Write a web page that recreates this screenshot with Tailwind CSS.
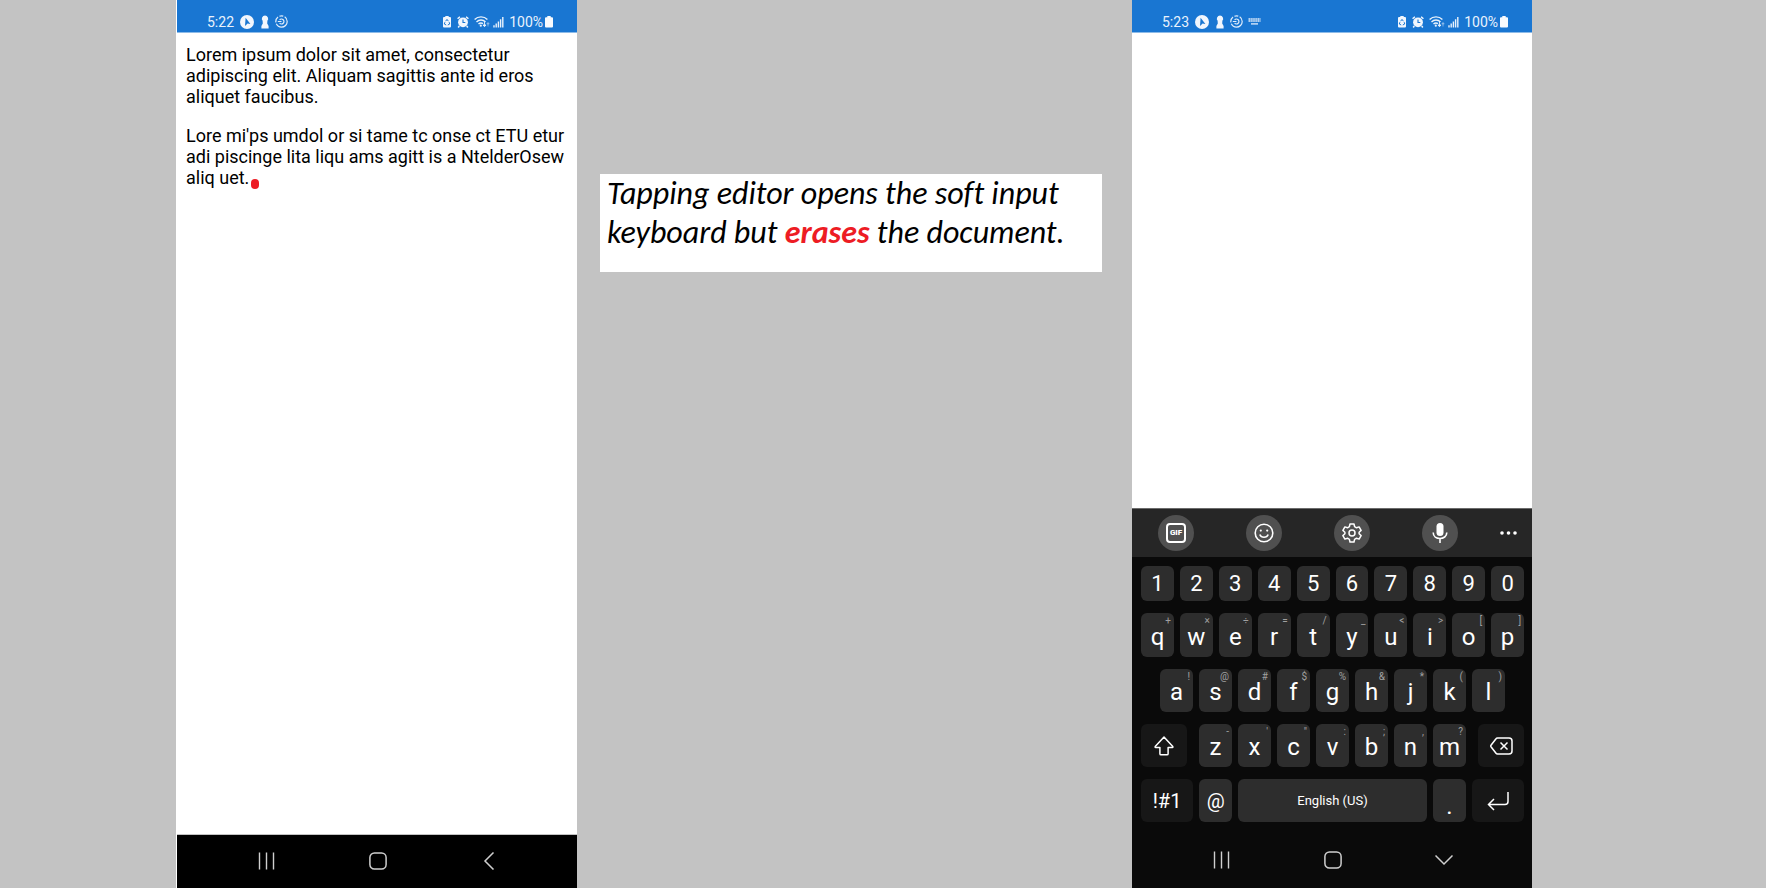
<!DOCTYPE html>
<html lang="en">
<head>
<meta charset="utf-8">
<meta name="viewport" content="width=device-width, initial-scale=1">
<title>Soft input keyboard erases the document</title>
<script src="https://cdn.jsdelivr.net/npm/@tailwindcss/browser@4"></script>
</head>
<body class="bg-[#c3c3c3] font-['Roboto',sans-serif]">
<svg class="hidden" aria-hidden="true">
  <symbol id="cursor" viewBox="0 0 14 14"><circle cx="7" cy="7" r="7" fill="#f1f6fd"/><path d="M5.600 2.800 10.400 9 7.600 8.600 5 11Z" fill="#1976d2"/></symbol>
  <symbol id="keyhole" viewBox="0 0 8 14"><path d="M4 .5a3.200 3.200 0 0 1 2.400 5.300L6.200 8.500 7.600 11v2.500H.4V11l1.400-2.500-.2-2.700A3.200 3.200 0 0 1 4 .5Z" fill="#f1f6fd"/></symbol>
  <symbol id="sync" viewBox="0 0 13 13"><g fill="none" stroke="#e3eefb" stroke-width="1.200"><circle cx="6.500" cy="6.500" r="5.700" stroke-dasharray="15 1.500 6 1.500 4 1.500"/><path d="M4.600 4.800a2.500 2.500 0 1 1 0 3.400M2.800 6.500h3.700"/></g></symbol>
  <symbol id="mini-keyboard" viewBox="0 0 13 7"><path d="M.5 1h12M.5 3h12" stroke="#e3eefb" stroke-width="1.500" stroke-dasharray="1.500 .4" fill="none"/><path d="M3 5.900h7" stroke="#e3eefb" stroke-width="1.300"/></symbol>
  <symbol id="recycle" viewBox="0 0 8 12"><path d="M2.300 0h3.400v1H7a1 1 0 0 1 1 1v8.500A1 1 0 0 1 7 11.500H1a1 1 0 0 1-1-1V2a1 1 0 0 1 1-1h1.300Z" fill="#f1f6fd"/><path d="M2.600 5.200 4 3.400l1.400 1.800M6.200 6.200l.5 1.800-1.900 1M3.200 9 1.300 8l.6-1.800" fill="none" stroke="#1976d2"/></symbol>
  <symbol id="alarm" viewBox="0 0 12 12"><circle cx="6" cy="6.300" r="4.900" fill="#f1f6fd"/><path d="M.6 2.800 2.900.8M11.400 2.800 9.100.8M2.300 10 1.200 11.500M9.700 10l1.100 1.500" stroke="#f1f6fd" stroke-width="1.500"/><path d="M6 3.500v3h2.300" fill="none" stroke="#1976d2" stroke-width="1.100"/></symbol>
  <symbol id="wifi" viewBox="0 0 16 13"><g fill="none" stroke="#e9f2fc" stroke-width="1.400"><path d="M.6 4.500a9 9 0 0 1 12.800 0M2.500 6.900a6.400 6.400 0 0 1 9 0M4.500 9.100a3.600 3.600 0 0 1 4.500-.5"/></g><circle cx="6.800" cy="10.700" r="1.100" fill="#e9f2fc"/><path d="M10.500 7v4M9 10l1.500 1.700L12 10Z" stroke="#e9f2fc" fill="#e9f2fc" stroke-width=".9"/><path d="M14 11.500V8M12.800 9 14 7.500 15.200 9Z" stroke="#8dbbea" fill="#8dbbea" stroke-width=".8"/></symbol>
  <symbol id="signal" viewBox="0 0 11 12"><path d="M1 11.500V9.300M3.200 11.500V7.600M5.400 11.500V5.500M7.600 11.500V3.300M9.800 11.500V1" stroke="#e9f2fc" stroke-width="1.400"/></symbol>
  <symbol id="battery" viewBox="0 0 8 12"><path d="M2.300 0h3.400v1.200H7a1 1 0 0 1 1 1v8.300a1 1 0 0 1-1 1H1a1 1 0 0 1-1-1V2.200a1 1 0 0 1 1-1h1.300Z" fill="#f7fafe"/></symbol>
  <symbol id="recents" viewBox="0 0 18 18"><path d="M1.500 .5v17M8.500 .5v17M15.500 .5v17" stroke="#cfcfcf" stroke-width="1.400"/></symbol>
  <symbol id="home" viewBox="0 0 18 18"><rect x=".9" y=".9" width="16.200" height="16.200" rx="4.500" fill="none" stroke="#cfcfcf" stroke-width="1.500"/></symbol>
</svg>

<div class="grid min-h-screen grid-cols-[176fr_401fr_23fr_502fr_30fr_400fr_234fr]">

  <section aria-label="Before tapping" class="col-start-2 flex min-w-0 flex-col border-l border-white bg-white">
    <header class="flex h-8 items-end justify-between bg-[#1976d2] pr-6 pb-[3px] pl-[30px] text-sm text-[#e9f2fc] shadow-[0_1px_0_#8dbbe8]">
      <div class="flex h-[15px] items-center">
        <time class="mr-1.5">5:22</time>
        <svg class="mr-[7px] h-[14px] w-[14px]"><use href="#cursor"/></svg>
        <svg class="mr-1.5 h-[14px] w-2"><use href="#keyhole"/></svg>
        <svg class="h-[13px] w-[13px]"><use href="#sync"/></svg>
      </div>
      <div class="flex h-[15px] items-center">
        <svg class="mr-1.5 h-3 w-2"><use href="#recycle"/></svg>
        <svg class="mr-[5px] h-3 w-3"><use href="#alarm"/></svg>
        <svg class="mr-[3px] h-[13px] w-4"><use href="#wifi"/></svg>
        <svg class="mr-[5px] h-3 w-[11px]"><use href="#signal"/></svg>
        <span class="mr-0.5">100%</span>
        <svg class="h-3 w-2"><use href="#battery"/></svg>
      </div>
    </header>
    <main contenteditable="true" role="textbox" aria-label="Document" class="flex-1 space-y-[18px] px-[9px] pt-3 text-lg leading-[21px] text-black outline-none">
      <p>Lorem ipsum dolor sit amet, consectetur adipiscing elit. Aliquam sagittis ante id eros aliquet faucibus.</p>
      <p>Lore mi'ps umdol or si tame tc onse ct ETU etur adi piscinge lita liqu ams agitt is a NtelderOsew aliq uet.<span class="ml-0.5 inline-block h-[10px] w-2 rounded-full bg-[#ed1c24] align-[-5px]"></span></p>
    </main>
    <nav class="grid h-[54px] grid-cols-3 place-items-center border-t border-[#c3c3c3] bg-black pr-8 pb-0.5 pl-[34px]">
      <button aria-label="Recents"><svg class="h-[18px] w-[18px]"><use href="#recents"/></svg></button>
      <button aria-label="Home"><svg class="h-[18px] w-[18px]"><use href="#home"/></svg></button>
      <button aria-label="Back"><svg class="h-[18px] w-[18px]" viewBox="0 0 18 18"><path d="M13.500.5 5 9l8.500 8.500" fill="none" stroke="#cfcfcf" stroke-width="1.500"/></svg></button>
    </nav>
  </section>

  <p class="col-start-4 mt-[174px] h-[98px] self-start bg-white px-[7px] font-['Carlito','Lato',sans-serif] text-[32px] leading-[39px] text-black italic [font-variant-ligatures:none]">Tapping editor opens the soft input<br>keyboard but <strong class="font-bold text-[#ed1c24]">erases</strong> the document.</p>

  <section aria-label="After tapping" class="col-start-6 flex min-w-0 flex-col bg-white">
    <header class="flex h-8 items-end justify-between bg-[#1976d2] pr-6 pb-[3px] pl-[30px] text-sm text-[#e9f2fc] shadow-[0_1px_0_#8dbbe8]">
      <div class="flex h-[15px] items-center">
        <time class="mr-1.5">5:23</time>
        <svg class="mr-[7px] h-[14px] w-[14px]"><use href="#cursor"/></svg>
        <svg class="mr-1.5 h-[14px] w-2"><use href="#keyhole"/></svg>
        <svg class="mr-[5px] h-[13px] w-[13px]"><use href="#sync"/></svg>
        <svg class="h-[7px] w-[13px]"><use href="#mini-keyboard"/></svg>
      </div>
      <div class="flex h-[15px] items-center">
        <svg class="mr-1.5 h-3 w-2"><use href="#recycle"/></svg>
        <svg class="mr-[5px] h-3 w-3"><use href="#alarm"/></svg>
        <svg class="mr-[3px] h-[13px] w-4"><use href="#wifi"/></svg>
        <svg class="mr-[5px] h-3 w-[11px]"><use href="#signal"/></svg>
        <span class="mr-0.5">100%</span>
        <svg class="h-3 w-2"><use href="#battery"/></svg>
      </div>
    </header>
    <textarea aria-label="Document" class="mt-px w-full flex-1 resize-none bg-white px-[9px] pt-3 text-lg leading-[21px] outline-none"></textarea>

    <div class="grid h-[49px] grid-cols-[88fr_88fr_88fr_88fr_48fr] place-items-center border-t border-[#6b6b6b] bg-[#262626] text-white">
      <button aria-label="GIF" class="grid size-9 place-items-center rounded-full bg-[#505050]"><span class="grid size-[18px] place-items-center rounded-[3px] outline-2 -outline-offset-1 outline-white text-[8px] leading-none font-black">GIF</span></button>
      <button aria-label="Emoji" class="grid size-9 place-items-center rounded-full bg-[#505050]"><svg class="size-5" viewBox="0 0 20 20" fill="none" stroke="#fff" stroke-width="1.600"><circle cx="10" cy="10" r="8.800"/><path d="M5.800 11.500c1.500 3.700 6.900 3.700 8.400 0"/><circle cx="6.800" cy="7.600" r="1.100" fill="#fff" stroke="none"/><circle cx="13.200" cy="7.600" r="1.100" fill="#fff" stroke="none"/></svg></button>
      <button aria-label="Settings" class="grid size-9 place-items-center rounded-full bg-[#505050]"><svg class="size-5" viewBox="0 0 20 20" fill="none" stroke="#fff" stroke-width="1.500" stroke-linejoin="round"><path d="M8 1h4l.6 2.700 1.900 1.100 2.600-.9 2 3.500-2 1.800v1.600l2 1.800-2 3.500-2.600-.9-1.900 1.100L12 19H8l-.6-2.700-1.900-1.100-2.600.9-2-3.500 2-1.800V9.200l-2-1.800 2-3.500 2.600.9 1.900-1.100Z"/><circle cx="10" cy="10" r="3"/></svg></button>
      <button aria-label="Voice input" class="grid size-9 place-items-center rounded-full bg-[#505050]"><svg class="h-5 w-4" viewBox="0 0 16 20"><rect x="4.500" y="0" width="7" height="13" rx="3.500" fill="#fff"/><path d="M1.200 9.500c0 8 13.600 8 13.600 0M8 15.500V20" fill="none" stroke="#fff" stroke-width="1.600"/></svg></button>
      <button aria-label="More"><svg class="h-1 w-[17px]" viewBox="0 0 17 4" fill="#fff"><circle cx="2" cy="2" r="1.800"/><circle cx="8.500" cy="2" r="1.800"/><circle cx="15" cy="2" r="1.800"/></svg></button>
    </div>

    <div class="flex flex-col gap-3 bg-[#0a0a0a] pt-[9px] pr-2 pb-[11px] pl-[9px] text-white">
      <div class="flex h-[35px] gap-1.5" data-keys="1 2 3 4 5 6 7 8 9 0"></div>
      <div class="flex h-11 gap-1.5" data-keys="q w e r t y u i o p" data-hints="+ × ÷ = / _ &lt; &gt; [ ]"></div>
      <div class="flex h-[43px] gap-1.5 px-[19px]" data-keys="a s d f g h j k l" data-hints="! @ # $ % &amp; * ( )"></div>
      <div class="flex h-[43px] gap-3">
        <button aria-label="Shift" class="grid flex-[46] place-items-center rounded-md bg-[#171717]"><svg class="size-5" viewBox="0 0 20 20"><path d="M10 1 1.200 10.600c-.3.400-.1.800.4.800h4.300v6.300c0 .7.400 1.100 1.100 1.100h6c.7 0 1.100-.4 1.100-1.100v-6.300h4.300c.5 0 .7-.4.4-.8Z" fill="none" stroke="#fff" stroke-width="1.500" stroke-linejoin="round"/></svg></button>
        <div class="flex flex-[267] gap-1.5" data-keys="z x c v b n m" data-hints="- ' &quot; : ; , ?"></div>
        <button aria-label="Backspace" class="grid flex-[46] place-items-center rounded-md bg-[#171717]"><svg class="h-[18px] w-[23px]" viewBox="0 0 23 18" fill="none" stroke="#fff" stroke-width="1.500" stroke-linejoin="round"><path d="M7.500 1H19a3 3 0 0 1 3 3v10a3 3 0 0 1-3 3H7.500Q6.500 17 6 16.300L1 9.700q-.5-.7 0-1.400L6 1.700Q6.500 1 7.500 1Z"/><path d="m10.500 5.500 7 7m0-7-7 7"/></svg></button>
      </div>
      <div class="flex h-[43px] gap-1.5">
        <button class="flex-[52] rounded-md bg-[#171717] text-xl">!#1</button>
        <button class="flex-[33] rounded-md bg-[#2d2d2d] text-xl">@</button>
        <button class="flex-[188] rounded-md bg-[#2d2d2d] text-[13px]">English (US)</button>
        <button class="flex flex-[33] items-end justify-center rounded-md bg-[#2d2d2d] pb-1 text-2xl leading-6">.</button>
        <button aria-label="Enter" class="grid flex-[52] place-items-center rounded-md bg-[#171717]"><svg class="h-5 w-[22px]" viewBox="0 0 22 20" fill="none" stroke="#fff" stroke-width="1.500"><path d="M21 1v9.500a3 3 0 0 1-3 3H1.500M7 8l-5.500 5.500L7 19"/></svg></button>
      </div>
    </div>

    <nav class="grid h-[55px] grid-cols-3 place-items-center bg-[#0a0a0a] pr-8 pb-0.5 pl-[34px]">
      <button aria-label="Recents"><svg class="h-[18px] w-[18px]"><use href="#recents"/></svg></button>
      <button aria-label="Home"><svg class="h-[18px] w-[18px]"><use href="#home"/></svg></button>
      <button aria-label="Hide keyboard"><svg class="h-[18px] w-[18px]" viewBox="0 0 18 18"><path d="M.5 4.500 9 13l8.500-8.500" fill="none" stroke="#cfcfcf" stroke-width="1.500"/></svg></button>
    </nav>
  </section>
</div>

<script>
  // Fill each keyboard row from its list of keys and secondary symbols.
  document.querySelectorAll('[data-keys]').forEach(row => {
    const hints = (row.dataset.hints || '').split(' ');
    row.dataset.keys.split(' ').forEach((k, i) => {
      const b = document.createElement('button');
      b.textContent = k;
      if (row.dataset.hints) {
        b.className = 'relative flex flex-[33] items-end justify-center rounded-md bg-[#2d2d2d] pb-2 text-2xl leading-6';
        const h = document.createElement('span');
        h.className = 'absolute top-0.5 right-[3px] text-[10px] leading-3 text-[#a0a0a0]';
        h.textContent = hints[i];
        b.append(h);
      } else {
        b.className = 'flex-[33] rounded-md bg-[#2d2d2d] text-[22px] leading-6';
      }
      row.append(b);
    });
  });
</script>
</body>
</html>
